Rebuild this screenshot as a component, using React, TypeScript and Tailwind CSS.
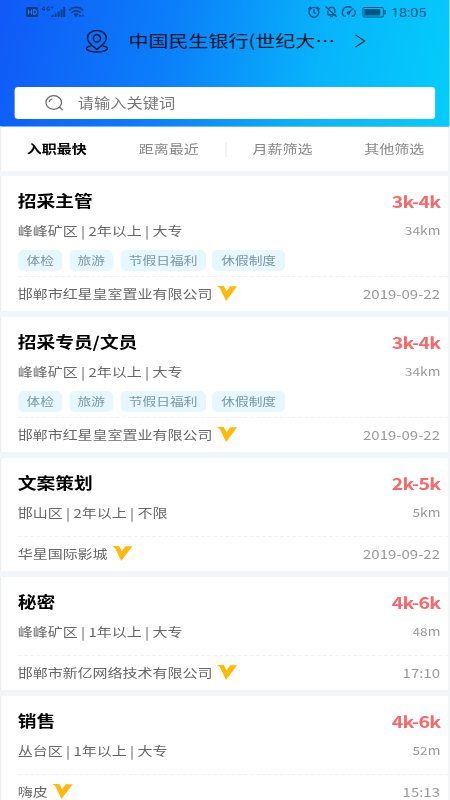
import React, { useState } from "react";
import clsx from "clsx";

const tabs = ["入职最快", "距离最近", "月薪筛选", "其他筛选"];

const jobs = [
  {
    id: 1,
    title: "招采主管",
    salary: "3k-4k",
    info: "峰峰矿区 | 2年以上 | 大专",
    distance: "34km",
    tags: ["体检", "旅游", "节假日福利", "休假制度"],
    company: "邯郸市红星皇室置业有限公司",
    date: "2019-09-22",
  },
  {
    id: 2,
    title: "招采专员/文员",
    salary: "3k-4k",
    info: "峰峰矿区 | 2年以上 | 大专",
    distance: "34km",
    tags: ["体检", "旅游", "节假日福利", "休假制度"],
    company: "邯郸市红星皇室置业有限公司",
    date: "2019-09-22",
  },
  {
    id: 3,
    title: "文案策划",
    salary: "2k-5k",
    info: "邯山区 | 2年以上 | 不限",
    distance: "5km",
    tags: [],
    company: "华星国际影城",
    date: "2019-09-22",
  },
  {
    id: 4,
    title: "秘密",
    salary: "4k-6k",
    info: "峰峰矿区 | 1年以上 | 大专",
    distance: "48m",
    tags: [],
    company: "邯郸市新亿网络技术有限公司",
    date: "17:10",
  },
  {
    id: 5,
    title: "销售",
    salary: "4k-6k",
    info: "丛台区 | 1年以上 | 大专",
    distance: "52m",
    tags: [],
    company: "嗨皮",
    date: "15:13",
  },
];

const StatusBar = () => (
  <div className="flex h-6 items-center justify-between pl-[21px] pr-[19.500px] text-[#002a4d]/70">
    <svg
      className="h-6 w-[49.200px]"
      viewBox="0 0 60 24"
      preserveAspectRatio="none"
      fill="none"
      stroke="currentColor"
    >
      <rect x="0.500" y="7" width="12" height="10" rx="1.500" fill="currentColor" stroke="none" />
      <path
        d="M3 9.500v5M6 9.500v5M3 12h3M8 9.700v4.600h.8c1.400 0 1.900-.9 1.900-2.300s-.5-2.300-1.900-2.300z"
        stroke="#2f7bf5"
        strokeWidth="1.100"
      />
      <path
        d="M18.500 11V6.500L16.300 9.500h3M24 7.300c-.5-.8-2.600-.8-2.600 1.500s2.200 2.300 2.600 1.200v-.9h-1M25.300 7.300h2.400M26.500 6v2.500"
        strokeWidth="1"
      />
      <path d="M27 17v-2M30 17v-3.500M33 17v-5.500M36 17V9.500M38.600 17V7" strokeWidth="1.800" />
      <path
        d="M43.500 10.500c4-4.200 10.500-4.200 14 0M46 12.800c2.800-2.800 6.700-2.800 9 0M48.300 15c1.400-1.300 3.200-1.300 4.400 0"
        strokeWidth="1.500"
      />
      <path d="M49.300 15.700h2.400M53.500 15.700h1.800M56.700 15.700h1.600" strokeWidth="1.700" />
    </svg>
    <div className="flex items-center gap-[4px]">
      <svg
        className="h-6 w-[65.600px]"
        viewBox="0 0 80 24"
        preserveAspectRatio="none"
        fill="none"
        stroke="currentColor"
        strokeWidth="1.400"
      >
        <circle cx="8" cy="12.300" r="4.900" />
        <path d="M8 9.500v3l2 1.200M2.200 9.200l2.800-2.400M13.800 9.200L11 6.800" />
        <path d="M21.500 14.800H30M22 14.500v-4M23 8.500c2-2.500 6-1.300 6 2v2.300M24.300 16.600h2.800M19.700 6.500L31 17" />
        <path d="M38.500 16.500c-3.600-3.200-2-9.800 4-9.800 1.500 0 2.600.5 3.200 1M48.800 10c1 2.400.6 4.800-1.400 6.500M43 12.800l4.500-4.500M38.300 16.300h1.800M45.800 16.300h1.600" />
        <circle cx="42.500" cy="13" r="1" />
        <rect x="57" y="7.500" width="20.500" height="9.500" rx="1" strokeWidth="1" />
        <rect x="58.500" y="9" width="16" height="6.500" fill="currentColor" stroke="none" />
        <path d="M79.200 10v4.600" strokeWidth="1.500" />
      </svg>
      <span className="pt-px font-['Roboto'] text-[12px] tracking-[-0.200px]">18:05</span>
    </div>
  </div>
);

const PinIcon = () => (
  <svg
    className="h-[24px] w-[19px]"
    viewBox="0 0 24 24"
    preserveAspectRatio="none"
    fill="none"
    stroke="#071c45"
    strokeWidth="1.600"
  >
    <path d="M12 20.300c-2.500-2-9.800-6-9.800-11.200C2.200 4.700 6.500 1.500 12 1.500s9.800 3.200 9.800 7.600c0 5.200-7.300 9.200-9.800 11.200z" />
    <circle cx="12" cy="9.300" r="3.700" />
    <path d="M6 17c-3 .4-4.800 1.400-4.800 2.600 0 1.900 4.800 3.400 10.800 3.400s10.800-1.500 10.800-3.400c0-1.200-1.800-2.200-4.800-2.600" />
  </svg>
);

const VipIcon = () => (
  <svg className="mb-[2px] h-[15px] w-[16.600px]" viewBox="0 0 20 15" preserveAspectRatio="none">
    <path d="M0 0h6.800l2.800 5.300L13 .3h7L9 15 3 2.200z" fill="#ffb90b" />
  </svg>
);

const JobCard = ({ data }: any) => (
  <div className="border-x border-[#eceff1] bg-white">
    <div
      className={clsx(
        "pl-[13.500px] pr-[6.900px] pt-3",
        data.tags.length ? "h-[100px]" : "h-[78px]"
      )}
    >
      <div className="flex h-[25px] items-center justify-between">
        <h2 className="text-[15.380px] font-bold text-black">{data.title}</h2>
        <span className="text-[16px] font-bold tracking-[-0.600px] text-[#fa6768]">
          {data.salary}
        </span>
      </div>
      <div className="mt-[6px] flex h-6 items-center justify-between">
        <p className="text-[12.300px] text-[#666]">{data.info}</p>
        <span className="pb-px text-[11.280px] text-[#999]">{data.distance}</span>
      </div>
      {data.tags.length > 0 && (
        <div className="mt-[7px] flex gap-[5.100px]">
          {data.tags.map((tag: string) => (
            <span
              key={tag}
              className="flex h-[21px] items-center rounded-[5px] bg-[#e6f7ff] px-[7.200px] text-[11.280px] text-[#7897a6]"
            >
              {tag}
            </span>
          ))}
        </div>
      )}
    </div>
    <div className="ml-[13.500px] h-px border-t border-dashed border-[#f1f1f1]" />
    <div className="flex h-[34px] items-center justify-between pl-[13.500px] pr-[7.200px]">
      <div className="flex items-center gap-[3.800px]">
        <span className="text-[12.300px] text-[#666]">{data.company}</span>
        <VipIcon />
      </div>
      <span className="text-[12.300px] text-[#999]">{data.date}</span>
    </div>
  </div>
);

const App = () => {
  const [selected, setSelected] = useState(0);

  return (
    <div className="h-[800px] w-[450px] overflow-hidden bg-[#f1f6fa]">
      {/* narrow phone layout, widened to the full page */}
      <div className="h-[800px] w-[369.230px] origin-top-left scale-x-[1.21875] overflow-hidden font-['Noto_Sans_CJK_SC',sans-serif] whitespace-nowrap">
        <header className="h-[126px] bg-[linear-gradient(100deg,#1059f7_0%,#0b80fa_38%,#08b4fb_70%,#04cdfb_100%)]">
          <StatusBar />
          <div className="flex h-[34px] items-center pl-[70px]">
            <PinIcon />
            <span className="ml-[16.500px] pb-px text-[16.410px] text-[#06162c]">
              中国民生银行(世纪大…
            </span>
            <svg
              className="ml-[16px] h-[14px] w-[9px]"
              viewBox="0 0 12 14"
              preserveAspectRatio="none"
              fill="none"
              stroke="#0b2c45"
              strokeWidth="1.200"
            >
              <path d="M1 1l10 6L1 13" />
            </svg>
          </div>
          <div className="mx-[12.300px] mt-[29px] flex h-8 items-center rounded-[3px] bg-white pl-[24.500px]">
            <svg
              className="h-[16px] w-[15px]"
              viewBox="0 0 18 16"
              preserveAspectRatio="none"
              fill="none"
              stroke="#666"
              strokeWidth="1.200"
            >
              <ellipse cx="8.500" cy="7.500" rx="7.700" ry="6.800" />
              <path d="M14 12l3.300 3M4 7c.3-1.700 1.500-2.700 3.200-3" />
            </svg>
            <span className="ml-[12px] text-[13.330px] text-[#777]">请输入关键词</span>
          </div>
        </header>

        <nav className="flex h-[45px] items-center border-x border-t border-x-[#eceff1] border-t-[#6fb8fc] bg-white text-[12.300px]">
          {tabs.map((tab, i) => (
            <React.Fragment key={tab}>
              {i === 2 && <span className="h-[15px] w-px shrink-0 bg-[#e8e8e8]" />}
              <button
                onClick={() => setSelected(i)}
                className={clsx(
                  "shrink-0 pt-px text-center",
                  i === 0 && "w-[91px]",
                  i === 1 && "w-[93px]",
                  i > 1 && "w-[91.700px]",
                  selected === i ? "font-bold text-black" : "text-[#888]"
                )}
              >
                {tab}
              </button>
            </React.Fragment>
          ))}
        </nav>

        <div className="mt-[5px] flex flex-col gap-[6px]">
          {jobs.map((job) => (
            <JobCard key={job.id} data={job} />
          ))}
        </div>
      </div>
    </div>
  );
};

export default App;
